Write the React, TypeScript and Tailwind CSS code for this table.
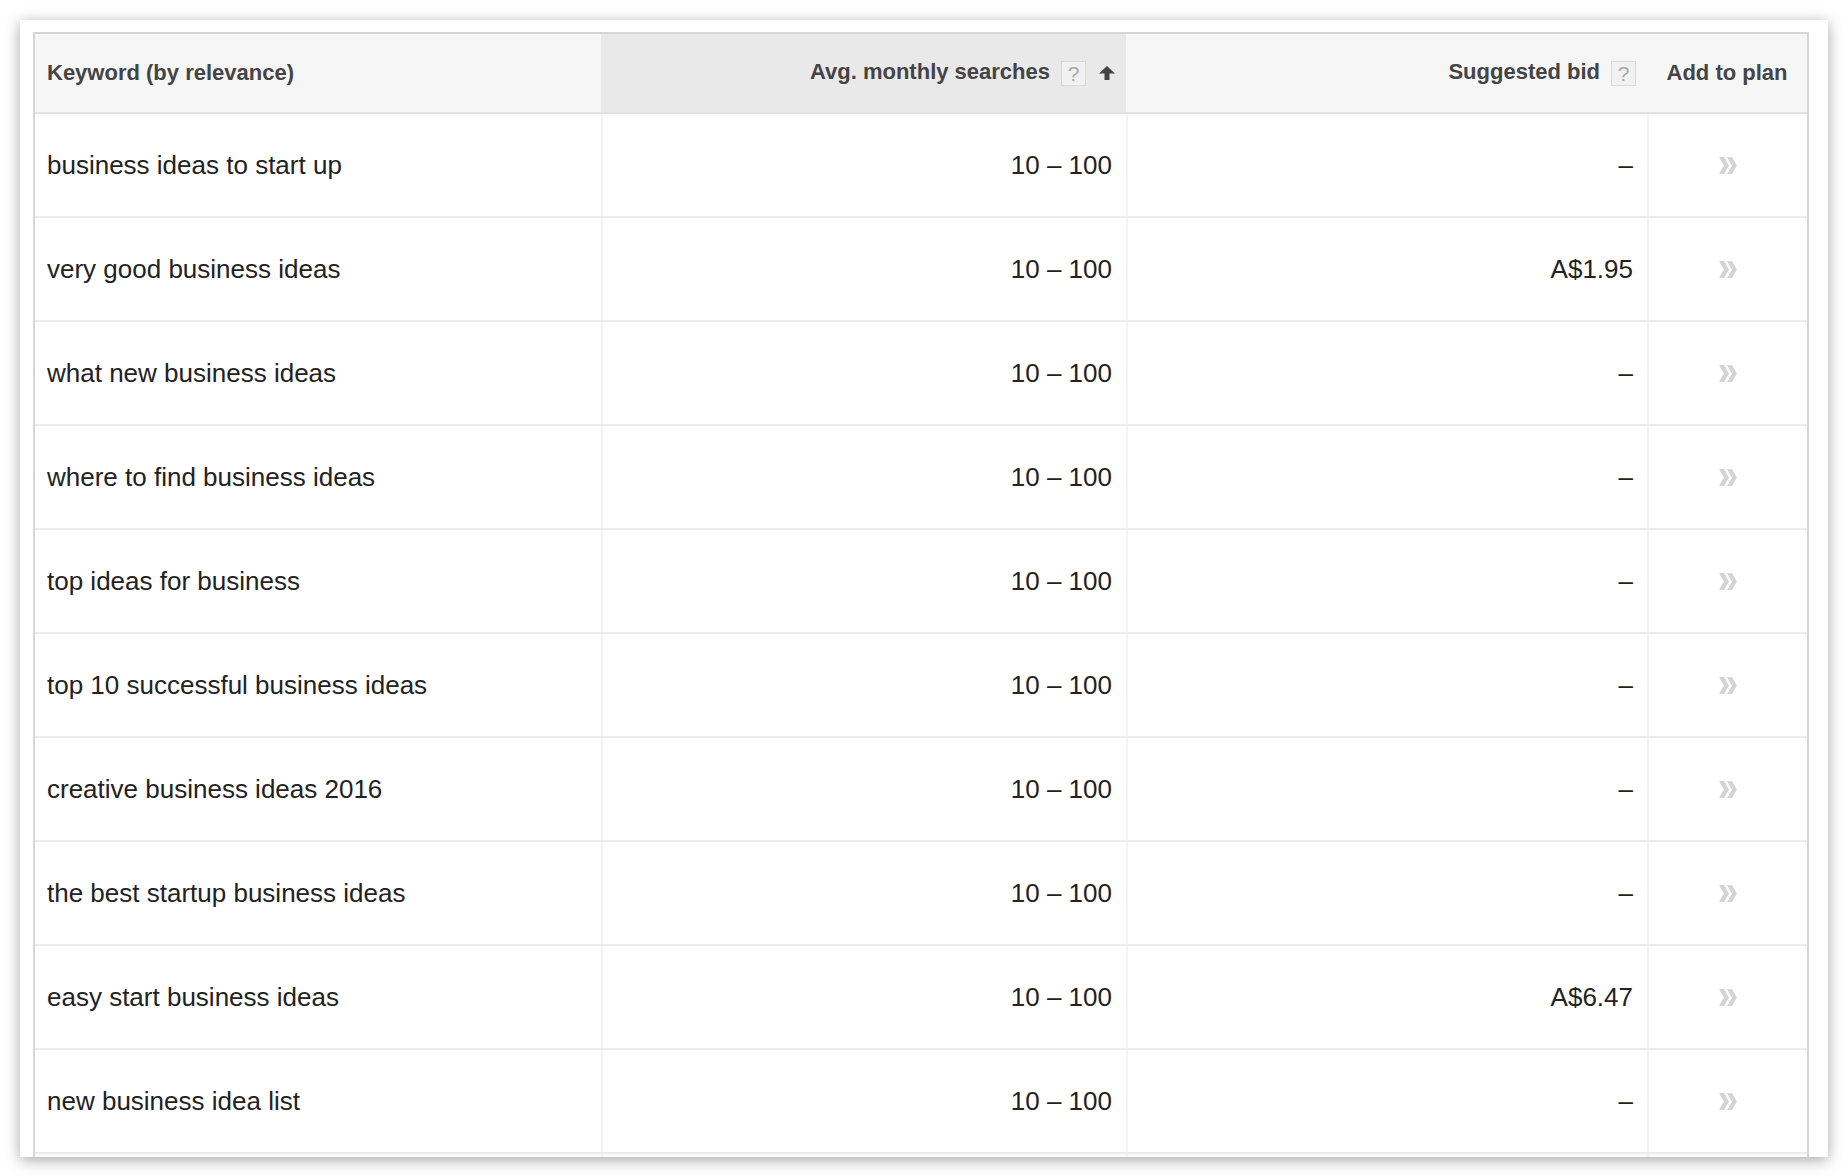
import React from 'react';

interface KeywordRow {
  keyword: string;
  searches: string;
  bid: string;
}

const rows: KeywordRow[] = [
  { keyword: 'business ideas to start up', searches: '10 – 100', bid: '–' },
  { keyword: 'very good business ideas', searches: '10 – 100', bid: 'A$1.95' },
  { keyword: 'what new business ideas', searches: '10 – 100', bid: '–' },
  { keyword: 'where to find business ideas', searches: '10 – 100', bid: '–' },
  { keyword: 'top ideas for business', searches: '10 – 100', bid: '–' },
  { keyword: 'top 10 successful business ideas', searches: '10 – 100', bid: '–' },
  { keyword: 'creative business ideas 2016', searches: '10 – 100', bid: '–' },
  { keyword: 'the best startup business ideas', searches: '10 – 100', bid: '–' },
  { keyword: 'easy start business ideas', searches: '10 – 100', bid: 'A$6.47' },
  { keyword: 'new business idea list', searches: '10 – 100', bid: '–' },
];

const HelpBox = () => (
  <span className="ml-[11px] flex h-[25px] w-[25px] items-center justify-center border border-[#d9d9d9] bg-[#f1f1f1] text-[21px] font-normal leading-none text-[#a8a8a8]">
    ?
  </span>
);

const SortArrow = () => (
  <svg width="16" height="14" viewBox="0 0 16 14" className="ml-[13px]">
    <path d="M8 0 L16 7.5 L10.5 7.5 L10.5 14 L5.5 14 L5.5 7.5 L0 7.5 Z" fill="#444" />
  </svg>
);

const AddChevron = () => (
  <svg width="18" height="17" viewBox="0 0 18 17">
    <polygon points="0,0 5,0 10,8.5 5,17 0,17 5,8.5" fill="#d4d4d4" />
    <polygon points="8,0 13,0 18,8.5 13,17 8,17 13,8.5" fill="#d4d4d4" />
  </svg>
);

const App = () => {
  return (
    <div className="min-h-screen bg-white p-5 font-['Liberation_Sans',Arial,sans-serif]">
      <div className="h-[1137px] w-[1808px] overflow-hidden bg-white pl-[13px] pr-[19px] pt-3 shadow-[0_3px_14px_rgba(0,0,0,0.35)]">
        <div className="border-2 border-b-0 border-[#d6d6d6]">
          {/* header */}
          <div className="grid h-[80px] grid-cols-[566px_525px_521px_1fr] border-b-2 border-[#e2e2e2] text-[22px] font-bold text-[#444]">
            <div className="flex items-center bg-[#f6f6f6] pb-[2px] pl-3">Keyword (by relevance)</div>
            <div className="flex items-center justify-end bg-[#e9e9e9] pr-[11px]">
              <span className="-mt-[4px]">Avg. monthly searches</span>
              <HelpBox />
              <SortArrow />
            </div>
            <div className="flex items-center justify-end bg-[#f6f6f6] pr-[11px]">
              <span className="-mt-[4px]">Suggested bid</span>
              <HelpBox />
            </div>
            <div className="flex items-center justify-center bg-[#f6f6f6] pb-[2px]">Add to plan</div>
          </div>

          {/* body */}
          {rows.map((row) => (
            <div
              key={row.keyword}
              className="grid h-[104px] grid-cols-[566px_525px_521px_1fr] border-b-2 border-[#ebebeb] text-[26px] text-[#222]"
            >
              <div className="flex items-center pl-3">{row.keyword}</div>
              <div className="flex items-center justify-end border-l-2 border-[#f3f3f3] pr-3.5">{row.searches}</div>
              <div className="flex items-center justify-end border-l-2 border-[#f3f3f3] pr-3.5">{row.bid}</div>
              <div className="flex items-center justify-center border-l-2 border-[#f3f3f3]">
                <AddChevron />
              </div>
            </div>
          ))}
          <div className="grid h-[10px] grid-cols-[566px_525px_521px_1fr] bg-[#fbfbf3]">
            <div />
            <div className="border-l-2 border-[#f3f3f3]" />
            <div className="border-l-2 border-[#f3f3f3]" />
            <div className="border-l-2 border-[#f3f3f3]" />
          </div>
        </div>
      </div>
    </div>
  );
};

export default App;
